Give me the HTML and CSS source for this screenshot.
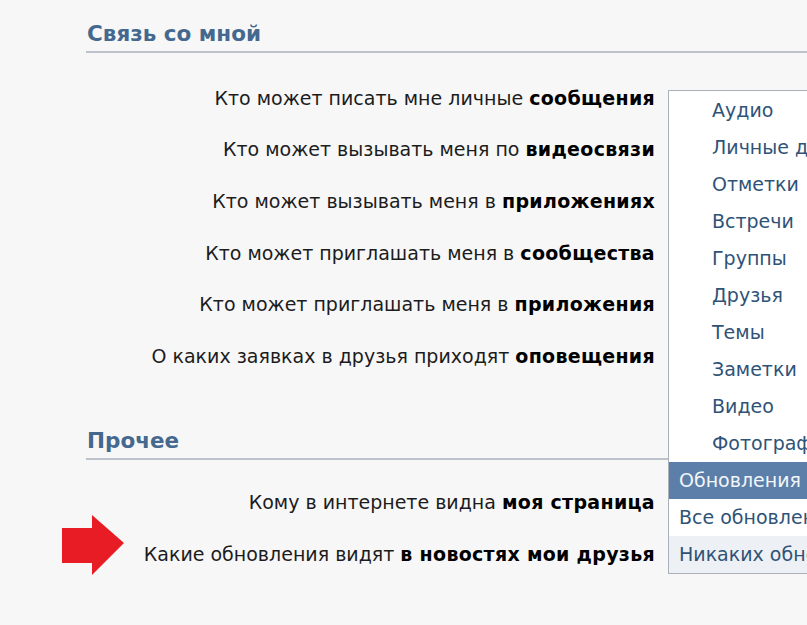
FILE: index.html
```html
<!DOCTYPE html>
<html lang="ru">
<head>
<meta charset="utf-8">
<link rel="stylesheet" href="styles.css">
</head>
<body>
<div class="page">
  <section class="section first">
    <h2 class="heading">Связь со мной</h2>
    <div class="rows">
      <div class="row"><span class="label">Кто может писать мне личные <b>сообщения</b></span></div>
      <div class="row"><span class="label">Кто может вызывать меня по <b>видеосвязи</b></span></div>
      <div class="row"><span class="label">Кто может вызывать меня в <b>приложениях</b></span></div>
      <div class="row"><span class="label">Кто может приглашать меня в <b>сообщества</b></span></div>
      <div class="row"><span class="label">Кто может приглашать меня в <b>приложения</b></span></div>
      <div class="row"><span class="label">О каких заявках в друзья приходят <b>оповещения</b></span></div>
    </div>
  </section>
  <section class="section second">
    <h2 class="heading">Прочее</h2>
    <div class="rows">
      <div class="row"><span class="label">Кому в интернете видна <b>моя страница</b></span></div>
      <div class="row arrow-row">
        <svg class="arrow" width="64" height="60" viewBox="0 0 64 60"><polygon points="0,13 30,13 30,0 62,28 30,60 30,48 0,48" fill="#e81c24"/></svg>
        <span class="label">Какие обновления видят <b>в новостях мои друзья</b></span>
      </div>
    </div>
  </section>

  <ul class="dropdown">
    <li class="opt sub">Аудио</li>
    <li class="opt sub">Личные данные</li>
    <li class="opt sub">Отметки</li>
    <li class="opt sub">Встречи</li>
    <li class="opt sub">Группы</li>
    <li class="opt sub">Друзья</li>
    <li class="opt sub">Темы</li>
    <li class="opt sub">Заметки</li>
    <li class="opt sub">Видео</li>
    <li class="opt sub">Фотографии</li>
    <li class="opt selected">Обновления разделов</li>
    <li class="opt">Все обновления</li>
    <li class="opt hover">Никаких обновлений</li>
  </ul>
</div>
</body>
</html>
```
FILE: styles.css
```css
html, body {
  margin: 0;
  padding: 0;
}
body {
  background: #f7f7f8;
  font-family: "DejaVu Sans", Verdana, sans-serif;
  width: 807px;
  height: 625px;
  overflow: hidden;
}
.page {
  position: relative;
  padding-left: 86px;
  padding-top: 20px;
}
.heading {
  margin: 0;
  font-size: 21.5px;
  line-height: 28px;
  font-weight: bold;
  color: #45688e;
  padding: 0 0 3px 1px;
  border-bottom: 2px solid #bcc2ca;
  width: 1000px;
}
.rows {
  margin-top: 19px;
  width: 569px;
  display: flex;
  flex-direction: column;
}
.row {
  height: 51.6px;
  display: flex;
  align-items: center;
  justify-content: flex-end;
  position: relative;
}
.label {
  font-size: 19px;
  color: #1c1c1c;
  white-space: nowrap;
}
.label b {
  color: #000;
  letter-spacing: 0.3px;
}
.section.second {
  margin-top: 45px;
}
.section.second .rows {
  margin-top: 17px;
}
.arrow {
  position: absolute;
  left: -24px;
  top: -13px;
}
.dropdown {
  position: absolute;
  left: 668px;
  top: 90px;
  width: 220px;
  margin: 0;
  padding: 1px 0 0;
  list-style: none;
  background: #fff;
  border: 1px solid #a9b0b9;
}
.opt {
  height: 37px;
  line-height: 37px;
  font-size: 19px;
  color: #2f5377;
  padding-left: 10px;
  white-space: nowrap;
}
.opt.sub {
  padding-left: 43px;
}
.opt.selected {
  background: #5b7fa8;
  color: #f2f5f9;
}
.opt.hover {
  background: #edf0f4;
}
```
